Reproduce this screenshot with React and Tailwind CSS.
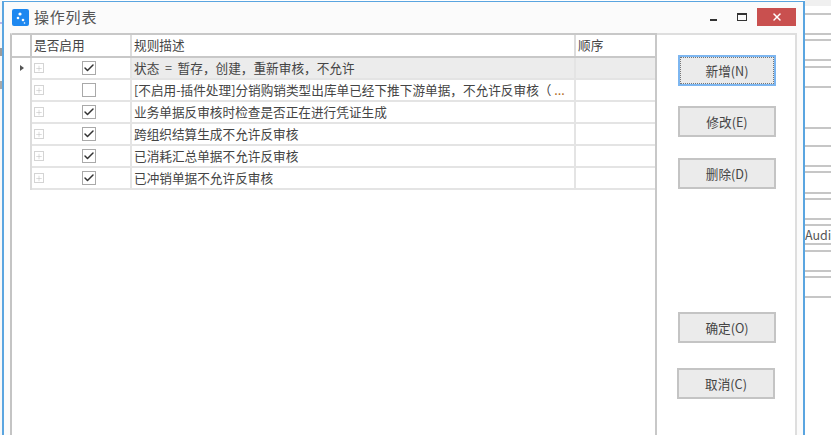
import React from "react";
import { Check, Plus, X } from "lucide-react";

const rows = [
  { on: true, text: "状态  =  暂存，创建，重新审核，不允许", current: true },
  { on: false, text: "[不启用-插件处理]分销购销类型出库单已经下推下游单据，不允许反审核（ ", more: true },
  { on: true, text: "业务单据反审核时检查是否正在进行凭证生成" },
  { on: true, text: "跨组织结算生成不允许反审核" },
  { on: true, text: "已消耗汇总单据不允许反审核" },
  { on: true, text: "已冲销单据不允许反审核" },
];

// lines of the form lying behind the dialog
const backLines = [
  "mt-[7px]", "mt-[18px]", "mt-[4px]", "mt-[18px]", "mt-[5px]", "mt-[18px]", "mt-[39px]", "mt-[16px]",
  "mt-[18px]", "mt-[4px]", "mt-[19px]", "mt-[4px]", "mt-[18px]", "mt-[4px]",
];
const backLinesBelow = ["mt-0", "mt-[5px]", "mt-[18px]", "mt-[4px]", "mt-[18px]"];

const Row = ({ on, text, current, more }) => (
  <div className={`flex h-[22px] border-b-2 border-[#e4e4e4] ${current ? "bg-[#ececec]" : ""}`}>
    <div className="flex w-[100px] items-center border-r-2 border-[#e4e4e4] bg-white pl-[2px]">
      <span className="flex size-[10px] items-center justify-center border border-[#d4d4d4]">
        <Plus size={9} strokeWidth={1.6} className="text-[#bdbdbd]" />
      </span>
      <span className="ml-[38px] flex size-[14px] items-center justify-center border border-[#a9a9a9] bg-white">
        {on && <Check size={12} strokeWidth={3} className="text-[#333]" />}
      </span>
    </div>
    <div className="w-[444px] overflow-hidden border-r-2 border-[#e4e4e4] pl-[2px] text-[12.65px] leading-[20px] whitespace-pre">
      {text}
      {more && <span className="text-[#b06a20]">...</span>}
    </div>
    <div className="flex-1" />
  </div>
);

const Button = ({ children, focused }) => (
  <button
    className={`h-[31px] w-[98px] shrink-0 border-2 bg-[#ebebeb] text-[12.65px] text-[#444] ${
      focused ? "border-[#7db6f0] outline-1 -outline-offset-3 outline-dotted outline-[#777]" : "border-[#c4c4c4]"
    }`}
  >
    {children}
  </button>
);

const BackgroundStrip = () => (
  <div className="flex h-full flex-col text-[12.5px] text-[#555]">
    <div className="h-[6px] bg-[#f0f0f0]" />
    {backLines.map((gap, i) => (
      <div key={i} className={`${gap} h-[2px] shrink-0 bg-[#c6c6c6]`} />
    ))}
    <div className="h-[17px] shrink-0 leading-[18px] whitespace-nowrap">Audi</div>
    {backLinesBelow.map((gap, i) => (
      <div key={i} className={`${gap} h-[2px] shrink-0 bg-[#c6c6c6]`} />
    ))}
  </div>
);

const App = () => {
  return (
    <div
      className="flex h-[435px] w-[831px] overflow-hidden bg-white text-[#444]"
      style={{ fontFamily: '"Noto Sans CJK SC", "Liberation Sans", sans-serif' }}
    >
      <div className="flex w-[2px] shrink-0 flex-col bg-[#f8f8f8]">
        <div className="mt-[22px] h-[2px] bg-[#b9b4e6]" />
        <div className="mt-[24px] h-[8px] bg-[#9a9a9a]" />
        <div className="mt-[25px] h-[8px] bg-[#a8a8a8]" />
      </div>
      <div className="mt-[1px] flex w-[803px] shrink-0 flex-col border-x-2 border-t border-[#5aa5e0] bg-[#fbfbfb]">
        <div className="flex h-[31px] shrink-0 items-center pl-[8px] pr-[7px]">
          <span className="size-[17px] rounded-[2px] bg-[#1e88f0]">
            <svg width="17" height="17" viewBox="0 0 17 17" fill="white">
              <circle cx="8" cy="5" r="1.6" />
              <circle cx="6" cy="9" r="1.3" />
              <circle cx="11" cy="11" r="1.3" />
              <circle cx="12.5" cy="14" r="0.8" />
            </svg>
          </span>
          <span className="ml-[5px] text-[15px] tracking-[0.8px] text-[#555]">操作列表</span>
          <div className="-mt-[1px] ml-auto flex items-center">
            <span className="mt-[6px] h-[2px] w-[7px] bg-[#333]" />
            <span className="ml-[20px] h-[8px] w-[10px] border border-t-2 border-[#333]" />
            <span className="ml-[10px] flex h-[18px] w-[39px] items-center justify-center bg-[#c9504f]">
              <X size={12} strokeWidth={3} className="text-white" />
            </span>
          </div>
        </div>
        <div className="mx-[6px] flex flex-1 border-x-2 border-t-2 border-r-[#dedede] border-l-[#c4c4c4] border-t-[#dedede] bg-white">
          <div className="-mt-[2px] w-[645px] shrink-0 border-t-2 border-r-2 border-[#c8c8c8]">
            <div className="flex h-[23px] border-b-2 border-[#c8c8c8] text-[12.65px] leading-[20px]">
              <div className="w-[20px] shrink-0 border-r-2 border-[#c8c8c8]" />
              <div className="w-[100px] border-r-2 border-[#dcdcdc] pl-[2px]">是否启用</div>
              <div className="w-[444px] border-r-2 border-[#dcdcdc] pl-[2px]">规则描述</div>
              <div className="pl-[2px]">顺序</div>
            </div>
            <div className="flex">
              <div className="w-[18px] shrink-0 pt-[7px] pl-[8px]">
                <span className="block h-0 w-0 border-y-[3.5px] border-l-[4px] border-y-transparent border-l-[#555]" />
              </div>
              <div className="flex-1 border-l-2 border-[#dcdcdc]">
                {rows.map((row) => (
                  <Row key={row.text} {...row} />
                ))}
              </div>
            </div>
          </div>
          <div className="flex flex-1 flex-col items-center pt-[20px] pl-[2px]">
            <Button focused>新增(N)</Button>
            <div className="mt-[20px]"><Button>修改(E)</Button></div>
            <div className="mt-[21px]"><Button>删除(D)</Button></div>
            <div className="mt-[123px]"><Button>确定(O)</Button></div>
            <div className="mt-[25px] -ml-[2px]"><Button>取消(C)</Button></div>
          </div>
        </div>
      </div>
      <div className="min-w-0 flex-1 overflow-hidden">
        <BackgroundStrip />
      </div>
    </div>
  );
};

export default App;
